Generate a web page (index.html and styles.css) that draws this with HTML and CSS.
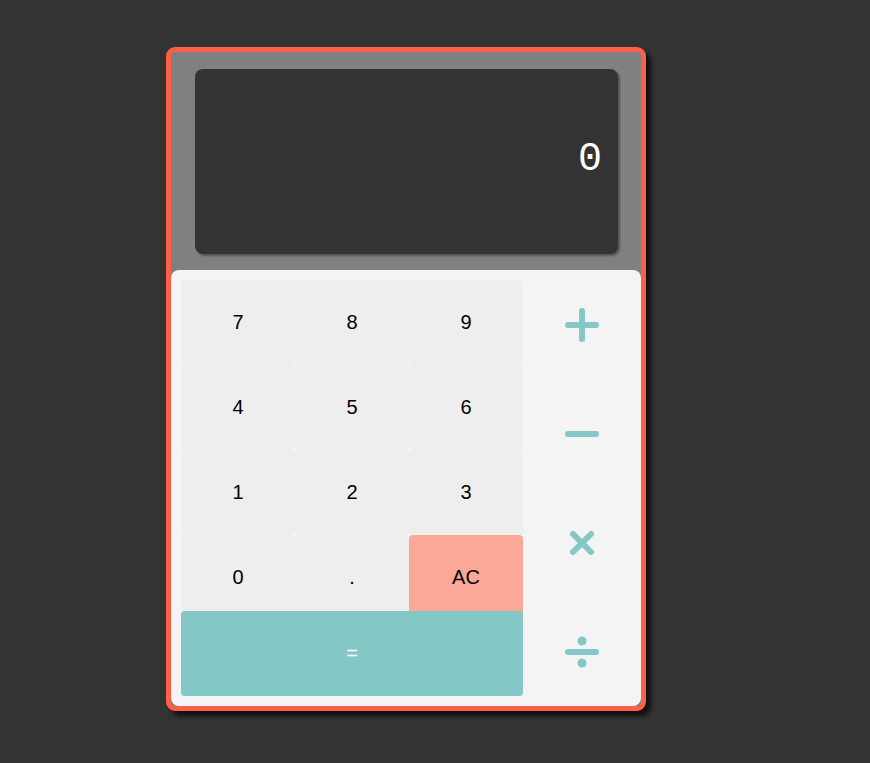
FILE: index.html
```html
<!DOCTYPE html>
<html>
<head>
<meta charset="utf-8">
<link rel="stylesheet" href="styles.css">
</head>
<body>
<div class="calc">
  <div class="screen-wrap">
    <div class="screen">0</div>
  </div>
  <div class="pad">
    <div class="keys">
      <div class="key">7</div>
      <div class="key">8</div>
      <div class="key">9</div>
      <div class="key">4</div>
      <div class="key">5</div>
      <div class="key">6</div>
      <div class="key">1</div>
      <div class="key">2</div>
      <div class="key">3</div>
      <div class="key">0</div>
      <div class="key">.</div>
      <div class="key ac">AC</div>
      <div class="key eq">=</div>
    </div>
    <div class="ops">
      <div class="op">
        <svg width="34" height="34" viewBox="0 0 34 34"><path d="M17 3V31M3 17H31" stroke="#83c8c7" stroke-width="6" stroke-linecap="round" fill="none"/></svg>
      </div>
      <div class="op">
        <svg width="34" height="34" viewBox="0 0 34 34"><path d="M3 17H31" stroke="#83c8c7" stroke-width="6" stroke-linecap="round" fill="none"/></svg>
      </div>
      <div class="op">
        <svg width="34" height="34" viewBox="0 0 34 34"><path d="M8 8L26 26M26 8L8 26" stroke="#83c8c7" stroke-width="6" stroke-linecap="round" fill="none"/></svg>
      </div>
      <div class="op">
        <svg width="34" height="34" viewBox="0 0 34 34"><path d="M3 17H31" stroke="#83c8c7" stroke-width="6" stroke-linecap="round" fill="none"/><circle cx="17" cy="6" r="4.5" fill="#83c8c7"/><circle cx="17" cy="28" r="4.5" fill="#83c8c7"/></svg>
      </div>
    </div>
  </div>
</div>
</body>
</html>
```
FILE: styles.css
```css
html, body {
  margin: 0;
  padding: 0;
  background: #333333;
  height: 100%;
}
body {
  padding: 47px 0 0 166px;
  box-sizing: border-box;
  font-family: "Liberation Sans", Arial, sans-serif;
}
.calc {
  width: 470px;
  border: 5px solid #ff5f47;
  border-radius: 9px;
  background: #808080;
  box-shadow: 5px 5px 4px #111111;
  display: flex;
  flex-direction: column;
  overflow: hidden;
}
.screen-wrap {
  padding: 17px 23px 16px 24px;
}
.screen {
  height: 185px;
  box-sizing: border-box;
  background: #333333;
  border-radius: 8px;
  box-shadow: 2px 2px 2px rgba(0,0,0,0.35);
  display: flex;
  align-items: center;
  justify-content: flex-end;
  padding: 0 16px 4px 0;
  color: #ffffff;
  font-family: "Liberation Mono", monospace;
  font-size: 40px;
}
.pad {
  background: #f4f4f4;
  border-radius: 8px;
  display: flex;
  height: 436px;
}
.keys {
  width: 342px;
  padding: 10px 0 10px 10px;
  display: grid;
  grid-template-columns: repeat(3, 114px);
  grid-template-rows: repeat(4, 85px) 85px;
  align-content: start;
}
.key {
  background: #eeeeee;
  border-radius: 4px;
  display: flex;
  align-items: center;
  justify-content: center;
  font-size: 20px;
  color: #000;
}
.key.ac {
  background: #fba899;
}
.key.eq {
  grid-column: 1 / 4;
  background: #83c8c7;
  color: #ffffff;
  margin-top: -9px;
  height: 85px;
}
.ops {
  width: 118px;
  display: flex;
  flex-direction: column;
}
.op {
  height: 109px;
  display: flex;
  align-items: center;
  justify-content: center;
}
.op svg {
  display: block;
}
```
